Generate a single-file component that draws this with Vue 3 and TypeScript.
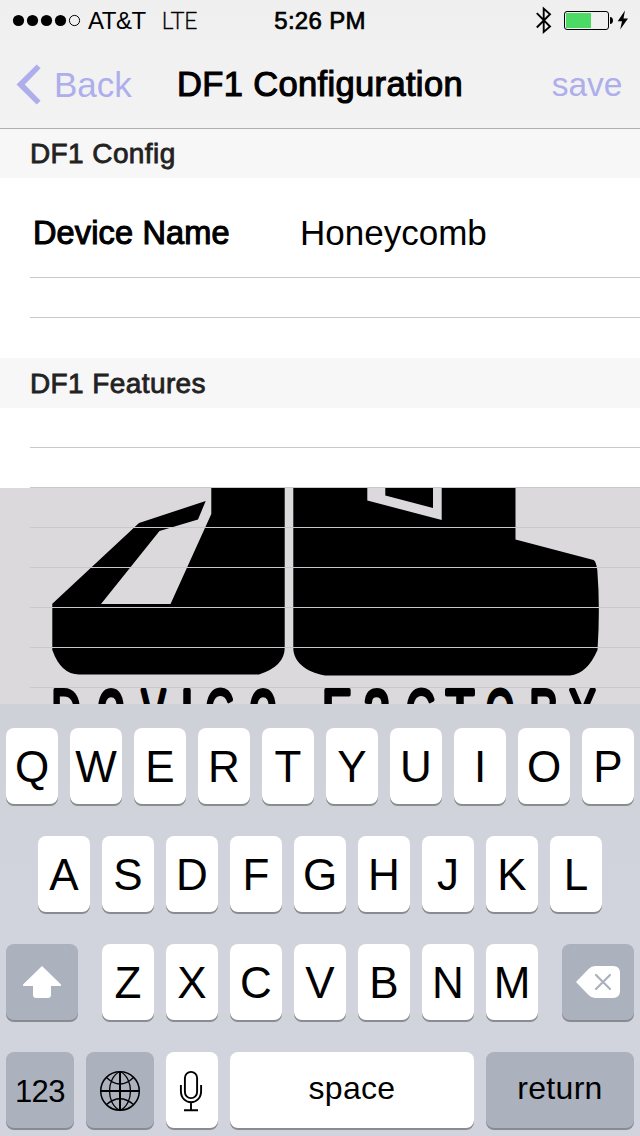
<script setup lang="ts">
interface LogoGlyph {
  ch: string
  x: number
  width: number
  size: number
  y: number
}

const signal = [18.5, 32.5, 46.5, 60.5]
const topRow = 'QWERTYUIOP'.split('')
const middleRow = 'ASDFGHJKL'.split('')
const bottomRow = 'ZXCVBNM'.split('')

const cap = (ch: string, x: number, width: number): LogoGlyph => ({ ch, x, width, size: 60, y: 731.3 })
const round = (ch: string, x: number, width: number): LogoGlyph => ({ ch, x, width, size: 80, y: 733 })

const wordmark: LogoGlyph[] = [
  cap('D', 51.5, 29),
  round('e', 97, 28),
  cap('V', 141.5, 24),
  cap('I', 180.5, 13),
  cap('C', 205.5, 28),
  round('e', 249, 28),
  cap('F', 322, 29),
  round('a', 362.5, 29),
  cap('C', 406, 29),
  cap('T', 445.5, 29),
  cap('O', 486, 28),
  cap('R', 529.5, 28),
  cap('Y', 569.5, 26),
]
const logoLines = [527.5, 567.5, 607.5, 647.5, 687.5]
</script>

<template>
  <div class="screen">
    <header class="top">
      <div class="status">
        <div class="carrier">
          <svg class="dots" width="82" height="40" viewBox="0 0 82 40">
            <circle v-for="x in signal" :key="x" :cx="x" cy="20.5" r="5.6" />
            <circle cx="74.5" cy="20.5" r="5.1" fill="none" stroke="#000" />
          </svg>
          <span class="att">AT&amp;T</span>
          <span class="lte">LTE</span>
        </div>
        <span class="clock">5:26 PM</span>
        <svg class="indicators" width="110" height="40" viewBox="530 0 110 40">
          <path d="M536.8 13.2 550 26.5 543.7 32V8.6L550 14.2 536.8 27.5" fill="none" stroke="#000" stroke-width="1.9" />
          <rect x="564.5" y="11.5" width="44" height="18" rx="2.5" fill="none" stroke="#000" />
          <rect x="566" y="13" width="25" height="15" fill="#4cd964" />
          <path d="M610 17c4 0 4 7 0 7z" />
          <path d="M625 10.5 617.7 21.2H622L620.2 29.5 628 18.5H623.5z" />
        </svg>
      </div>
      <nav class="nav">
        <div class="back">
          <svg width="26" height="42" viewBox="16 64 26 42">
            <path d="M16.5 84.5 36.7 64.5 40.6 68.3 24.7 84.5 40.6 100.7 36.7 104.5z" fill="#aeaeec" />
          </svg>
          <span>Back</span>
        </div>
        <h1>DF1 Configuration</h1>
        <span class="save">save</span>
      </nav>
    </header>

    <main class="list">
      <h2 class="section first">DF1 Config</h2>
      <div class="row device">
        <span class="label">Device Name</span>
        <span class="value">Honeycomb</span>
      </div>
      <div class="row"></div>
      <div class="row last"></div>
      <h2 class="section">DF1 Features</h2>
      <div class="row"></div>
      <div class="row"></div>
      <svg class="logo" width="640" height="216" viewBox="0 488 640 216">
        <path d="M211.3 488V514L170.5 604H101L159.5 531 198 519.5 205.7 501 139 523 52.3 603.7V650Q61 674.5 79 674.5H259Q284.7 666 284.7 648V488z" />
        <path fill-rule="evenodd" d="M293.3 488V648C293.3 661 305 672 325 675.5H570Q587 674 597.5 650 600.3 608 597.3 570 596 561 593.5 560L515.5 539.5V488zM367.3 488V500.5L441.7 520V488H433V508L385.3 495.5V488z" />
        <path v-for="y in logoLines" :key="y" :d="`M30 ${y}H640`" stroke="#c8c7cc" />
        <g class="wordmark">
          <text
            v-for="g in wordmark"
            :key="g.x"
            :x="g.x"
            :y="g.y"
            :font-size="g.size"
            :textLength="g.width"
            lengthAdjust="spacingAndGlyphs"
          >{{ g.ch }}</text>
        </g>
      </svg>
    </main>

    <section class="keyboard">
      <div class="keys">
        <div v-for="k in topRow" :key="k" class="key">{{ k }}</div>
      </div>
      <div class="keys">
        <div v-for="k in middleRow" :key="k" class="key">{{ k }}</div>
      </div>
      <div class="keys spread">
        <div class="key dark shift">
          <svg width="72" height="76" viewBox="6 944 72 76">
            <path d="M42 966 61 984.5Q61.5 986 60 986H51V995Q51 998 48 998H36Q33 998 33 995V986H24Q22.5 986 23 984.5z" fill="#fff" />
          </svg>
        </div>
        <div class="keys">
          <div v-for="k in bottomRow" :key="k" class="key">{{ k }}</div>
        </div>
        <div class="key dark shift">
          <svg width="72" height="76" viewBox="562 944 72 76">
            <path d="M576 982 588.5 969Q591.5 966 595 966H613Q620 966 620 973V991Q620 998 613 998H595Q591.5 998 588.5 995z" fill="#fff" />
            <path d="M596 975 610 989M610 975 596 989" stroke="#abb1bd" stroke-width="2.2" stroke-linecap="round" />
          </svg>
        </div>
      </div>
      <div class="keys">
        <div class="key dark small numbers">123</div>
        <div class="key dark small">
          <svg width="68" height="76" viewBox="86 1052 68 76" fill="none" stroke="#000" stroke-width="1.5">
            <circle cx="120" cy="1091" r="19.3" />
            <path d="M100.5 1091H139.5M120 1071.5V1110.5" stroke-width="2" />
            <path d="M120 1071.5C106 1078 106 1104 120 1110.5M120 1071.5C134 1078 134 1104 120 1110.5M106.5 1077.5Q120 1090.5 133.5 1077.5M106.5 1104.5Q120 1093 133.5 1104.5" stroke-width="1.3" />
          </svg>
        </div>
        <div class="key">
          <svg width="52" height="76" viewBox="166 1052 52 76" fill="none" stroke="#000" stroke-width="1.9">
            <rect x="184.9" y="1071.9" width="12.2" height="26.2" rx="6.1" />
            <path d="M180.9 1085V1091C180.9 1106 201.1 1106 201.1 1091V1085M191 1102V1110M184 1110.2H198" />
          </svg>
        </div>
        <div class="key word space">space</div>
        <div class="key dark word return">return</div>
      </div>
    </section>
  </div>
</template>

<style>
body {
  margin: 0;
}
</style>

<style scoped>
.screen {
  width: 640px;
  height: 1136px;
  overflow: hidden;
  display: flex;
  flex-direction: column;
  background: #fff;
  color: #000;
  font-family: "Liberation Sans", Arial, sans-serif;
}
svg {
  display: block;
  flex: none;
}
.top {
  box-sizing: border-box;
  height: 129px;
  background: linear-gradient(#efefef, #f3f3f3);
  border-bottom: 1px solid #b0b0b1;
}
.status {
  height: 40px;
  display: grid;
  grid-template-columns: 1fr auto 1fr;
  font-size: 24px;
  line-height: 41px;
}
.carrier {
  display: flex;
}
.att {
  margin-left: 6px;
  letter-spacing: -0.5px;
}
.lte {
  margin-left: 16px;
  font-family: Lato, sans-serif;
  font-size: 23.5px;
  font-weight: 300;
  letter-spacing: -0.4px;
  -webkit-text-stroke: 0.3px #000;
}
.clock {
  letter-spacing: 0.3px;
  -webkit-text-stroke: 0.7px #000;
}
.indicators {
  justify-self: end;
}
.nav {
  height: 88px;
  display: grid;
  grid-template-columns: 1fr auto 1fr;
  align-items: center;
  font-size: 35px;
  line-height: 89px;
}
.back {
  display: flex;
  align-items: center;
  gap: 12px;
  padding-left: 16px;
  color: #aeaeec;
}
h1 {
  margin: 0;
  font-size: 34.5px;
  font-weight: 400;
  letter-spacing: 0.35px;
  -webkit-text-stroke: 1.1px #000;
}
.save {
  justify-self: end;
  padding-right: 17.5px;
  font-size: 33.5px;
  color: #aeaeec;
}
.section {
  box-sizing: border-box;
  height: 50px;
  margin: 0;
  padding-left: 30px;
  background: #f7f7f7;
  color: #222;
  font-size: 28px;
  font-weight: 400;
  line-height: 51px;
  letter-spacing: 0.4px;
  -webkit-text-stroke: 0.8px #222;
}
.first {
  height: 49px;
  line-height: 49px;
}
.row {
  box-sizing: border-box;
  height: 40px;
  margin-left: 30px;
  border-bottom: 1px solid #c8c7cc;
}
.last {
  border-bottom: none;
}
.device {
  height: 100px;
  padding-top: 10px;
  display: grid;
  grid-template-columns: 270px 1fr;
  align-items: center;
  line-height: 40px;
}
.label {
  padding: 1px 0 0 3px;
  font-size: 32.5px;
  letter-spacing: 0.15px;
  -webkit-text-stroke: 1.1px #000;
}
.value {
  font-size: 35px;
}
.logo {
  background: #dbd9dc;
}
.wordmark {
  stroke: #000;
  stroke-width: 4;
  stroke-linejoin: round;
}
.keyboard {
  box-sizing: border-box;
  height: 432px;
  padding: 24px 6px 0;
  display: flex;
  flex-direction: column;
  align-items: center;
  gap: 32px;
  background: linear-gradient(#ced1d8, #d1d4dc 45%);
}
.keys {
  display: flex;
  gap: 12px;
}
.spread {
  width: 100%;
  justify-content: space-between;
  gap: 0;
}
.key {
  width: 52px;
  height: 76px;
  border-radius: 8px;
  background: #fff;
  box-shadow: 0 2px 0 #888b90;
  font-size: 44px;
  line-height: 78px;
  text-align: center;
}
.dark {
  background: #abb1bd;
}
.shift {
  width: 72px;
}
.small {
  width: 68px;
}
.numbers {
  font-size: 31px;
  line-height: 79px;
  letter-spacing: -0.5px;
}
.word {
  font-size: 32px;
  line-height: 73px;
  letter-spacing: 0.3px;
}
.space {
  width: 244px;
}
.return {
  width: 148px;
}
</style>
